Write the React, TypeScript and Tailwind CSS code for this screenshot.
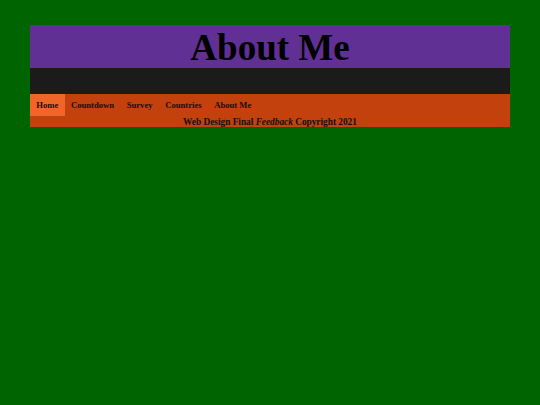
export default function App() {
  const links = ["Home", "Countdown", "Survey", "Countries", "About Me"];
  return (
    <div className="min-h-[405px] bg-[#006400] pt-[25px] font-['Liberation_Serif',serif]">
      <div className="mx-auto w-[480px]">
        {/* Title */}
        <header className="h-[43px] bg-[#603095] text-center">
          <h1 className="text-[37px] font-bold leading-[45px] text-black">About Me</h1>
        </header>
        <div className="h-[26px] bg-[#1b1b1b]" />
        {/* Nav + footer */}
        <div className="bg-[#c2410c]">
          <nav className="flex">
            {links.map((l, i) => (
              <a
                key={l}
                href="#"
                className={
                  i === 0
                    ? "bg-[#ef6628] px-[6.3px] text-[8.65px] font-bold leading-[22px] text-[#111]"
                    : "px-[6.3px] text-[8.65px] font-bold leading-[22px] text-[#111]"
                }
              >
                {l}
              </a>
            ))}
          </nav>
          <p className="pt-px text-center text-[9.3px] font-bold leading-[10px] text-[#111]">
            Web Design Final <em>Feedback</em> Copyright 2021
          </p>
        </div>
      </div>
    </div>
  );
}
